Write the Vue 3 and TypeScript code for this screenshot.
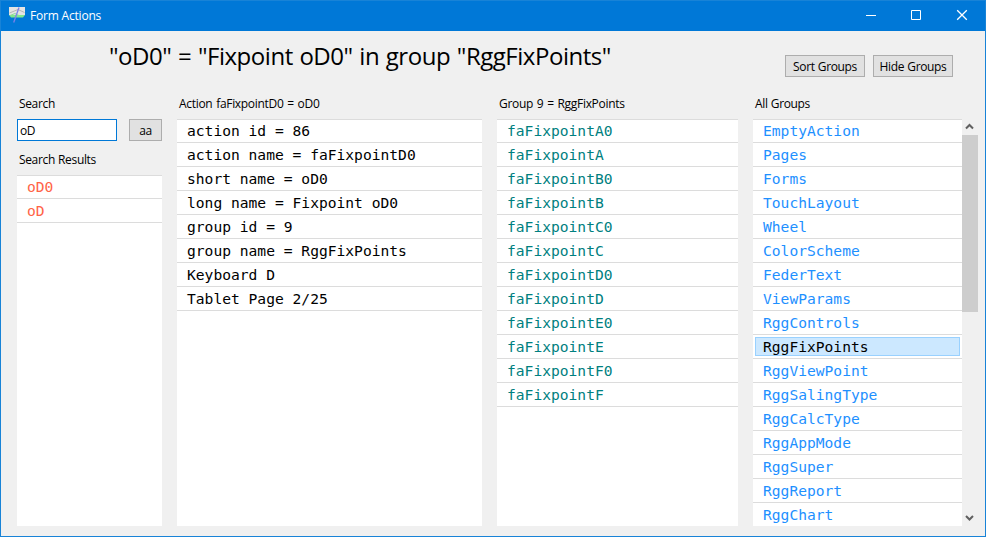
<script setup lang="ts">
const results: string[] = ['oD0', 'oD']
const details: string[] = [
  'action id = 86',
  'action name = faFixpointD0',
  'short name = oD0',
  'long name = Fixpoint oD0',
  'group id = 9',
  'group name = RggFixPoints',
  'Keyboard D',
  'Tablet Page 2/25',
]
const members: string[] = ['A0', 'A', 'B0', 'B', 'C0', 'C', 'D0', 'D', 'E0', 'E', 'F0', 'F'].map((s) => 'faFixpoint' + s)
const groups: string[] = [
  'EmptyAction', 'Pages', 'Forms', 'TouchLayout', 'Wheel', 'ColorScheme', 'FederText', 'ViewParams',
  'RggControls', 'RggFixPoints', 'RggViewPoint', 'RggSalingType', 'RggCalcType', 'RggAppMode',
  'RggSuper', 'RggReport', 'RggChart',
]
const selected = 'RggFixPoints'
</script>

<template>
  <div class="window">
    <header class="titlebar">
      <svg class="app-icon" width="16" height="16" viewBox="0 0 16 16" fill="none">
        <rect width="16" height="8" fill="#e4e4e4" />
        <path d="M0 8H16L14 10.5H2z" fill="#7fe88c" />
        <path d="M0.5 6L9 2.5L15.5 5.5" stroke="#b4b8b4" />
        <path d="M1 8.5L6 6.5L11 9" stroke="#8fdc98" />
        <path d="M10 0.5L4.7 15.5" stroke="#7c80ea" stroke-width="1.3" />
      </svg>
      <span class="caption">Form Actions</span>
      <svg class="controls" width="138" height="30" viewBox="0 0 138 30" fill="none" stroke="#fff">
        <path d="M19 14.5h10M64.5 9.5h9v9h-9z" />
        <path d="M110.2 9.2l9.6 9.6M119.8 9.2l-9.6 9.6" stroke-width="1.3" />
      </svg>
    </header>
    <section class="head">
      <h1 class="title">"oD0" = "Fixpoint oD0" in group "RggFixPoints"</h1>
      <div class="actions">
        <button class="btn">Sort Groups</button>
        <button class="btn">Hide Groups</button>
      </div>
    </section>
    <main class="columns">
      <section class="col search">
        <div class="label">Search</div>
        <div class="search-row">
          <div class="field">oD</div>
          <button class="btn small">aa</button>
        </div>
        <div class="label results-label">Search Results</div>
        <ul class="list tomato">
          <li v-for="r in results" :key="r">{{ r }}</li>
        </ul>
      </section>
      <section class="col detail">
        <div class="label">Action faFixpointD0 = oD0</div>
        <ul class="list">
          <li v-for="d in details" :key="d">{{ d }}</li>
        </ul>
      </section>
      <section class="col group">
        <div class="label">Group 9 = RggFixPoints</div>
        <ul class="list teal">
          <li v-for="m in members" :key="m">{{ m }}</li>
        </ul>
      </section>
      <section class="col all">
        <div class="label">All Groups</div>
        <div class="scroller">
          <ul class="list blue">
            <li v-for="g in groups" :key="g" :class="{ selected: g === selected }">{{ g }}</li>
          </ul>
          <div class="scrollbar">
            <svg width="16" height="16" viewBox="0 0 16 16"><path d="M4 9.5L7.5 6L11 9.5" fill="none" stroke="#606060" stroke-width="2" /></svg>
            <div class="thumb"></div>
            <svg class="down" width="16" height="16" viewBox="0 0 16 16"><path d="M4 6L7.5 9.5L11 6" fill="none" stroke="#606060" stroke-width="2" /></svg>
          </div>
        </div>
      </section>
    </main>
  </div>
</template>

<style>
body { margin: 0; overflow: hidden; }
</style>

<style scoped>
* { box-sizing: border-box; }
.window {
  width: 986px; height: 537px; display: flex; flex-direction: column;
  background: #f0f0f0; border: 1px solid #1883d7; color: #000;
  font: 12px/16px "Open Sans", "Noto Sans", sans-serif; letter-spacing: -0.35px; word-spacing: 0.4px;
}
.titlebar { height: 30px; flex: none; display: flex; align-items: center; background: #0078d7; color: #fff; padding-left: 8px; }
.app-icon { margin-bottom: 2px; }
.caption { margin-left: 5px; letter-spacing: -0.2px; word-spacing: 0; }
.controls { margin-left: auto; }
.head { height: 62px; flex: none; display: flex; justify-content: space-between; padding: 0 32px 0 108px; }
.title { margin: 8px 0 0; font-size: 24px; line-height: 34px; font-weight: 400; letter-spacing: -0.47px; word-spacing: 0.9px; white-space: nowrap; }
.actions { display: flex; gap: 8px; margin-top: 24px; }
.btn {
  width: 80px; height: 22px; padding: 1px 0 0; background: #e1e1e1; border: 1px solid #adadad; color: #000;
  font: inherit; letter-spacing: inherit; word-spacing: inherit; text-align: center; white-space: nowrap;
}
.columns { flex: 1; min-height: 0; display: flex; gap: 15px; padding: 0 7px 10px 16px; }
.col { display: flex; flex-direction: column; min-height: 0; }
.search { width: 145px; }
.detail { width: 305px; }
.detail .label, .group .label { letter-spacing: -0.31px; word-spacing: 1px; }
.group { width: 241px; }
.all { width: 225px; }
.label { height: 26px; flex: none; padding: 3px 0 0 2px; white-space: nowrap; }
.search-row { display: flex; justify-content: space-between; height: 22px; flex: none; }
.field { width: 100px; border: 1px solid #0078d7; background: #fff; padding: 3px 2px 0; }
.small { width: 33px; }
.results-label { height: 34px; padding-top: 11px; }
.list {
  flex: 1; min-height: 0; margin: 0; padding: 0; list-style: none; overflow: hidden; background: #fff;
  font: 14.62px/22px "DejaVu Sans Mono", monospace; letter-spacing: 0; word-spacing: 0;
}
li { height: 24px; padding: 1px 0 0 10px; border-bottom: 1px solid #dcdcdc; white-space: pre; }
li:first-child { border-top: 1px solid #dcdcdc; padding-top: 0; }
.tomato { color: #ff6347; }
.teal { color: #008080; }
.blue { color: #1e90ff; }
.selected { color: #000; background: linear-gradient(#cce8ff, #cce8ff) 3px 3px / 203px 17px no-repeat, linear-gradient(#99d1ff, #99d1ff) 2px 2px / 205px 19px no-repeat; }
.scroller { flex: 1; min-height: 0; display: flex; }
.scrollbar { width: 16px; flex: none; display: flex; flex-direction: column; }
.scrollbar svg { display: block; flex: none; }
.thumb { height: 177px; background: #cdcdcd; }
.down { margin-top: auto; }
</style>
